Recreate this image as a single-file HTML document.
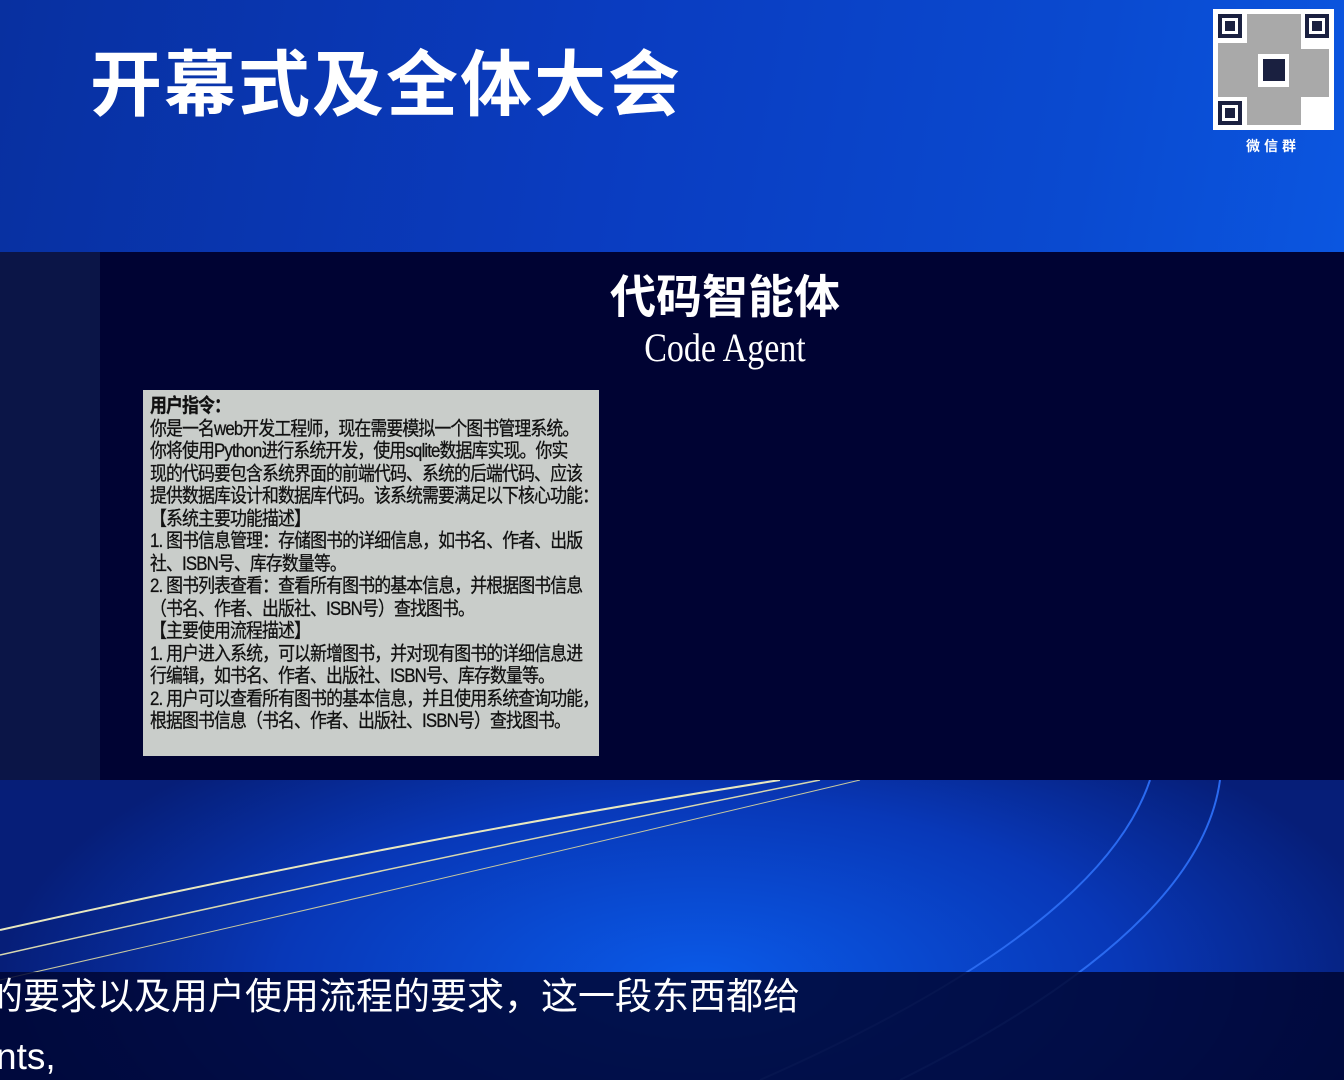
<!DOCTYPE html><html><head><meta charset="utf-8"><style>
body{margin:0;width:1344px;height:1080px;overflow:hidden;position:relative;font-family:"Liberation Sans","Noto Sans CJK SC",sans-serif;}
.top{position:absolute;left:0;top:0;width:1344px;height:252px;background:linear-gradient(100deg,#0830a0 0%,#0a3cc0 45%,#0a4ad0 80%,#0b56e0 100%);}
.title{position:absolute;left:90px;top:46px;font-size:72px;font-weight:bold;color:#fff;letter-spacing:2px;line-height:80px;}
.qr{position:absolute;left:1213px;top:9px;width:121px;height:121px;background:#fff;}
.wx{position:absolute;left:1246px;top:136px;color:#fff;font-size:14px;letter-spacing:4px;font-weight:bold}
.mid{position:absolute;left:0;top:252px;width:1344px;height:528px;background:#000333;}
.left{position:absolute;left:0;top:252px;width:100px;height:528px;background:#0b1547;}
.h1{position:absolute;left:0;width:1450px;text-align:center;top:268px;color:#fff;font-size:46px;font-weight:bold;line-height:58px}
.h2{position:absolute;left:0;width:1450px;text-align:center;top:326px;color:#fff;font-size:40px;font-family:"Liberation Serif",serif;line-height:44px;transform:scaleX(.85);transform-origin:725px 0}
.box{position:absolute;left:143px;top:390px;width:456px;height:366px;background:#c9cdca;overflow:hidden}
.in{position:absolute;left:7px;top:5px;font-size:19.5px;line-height:22.5px;color:#111;letter-spacing:-1px;white-space:nowrap;transform:scaleX(.865);transform-origin:0 0;-webkit-text-stroke:0.3px #111}
.bot{position:absolute;left:0;top:780px;width:1344px;height:300px;background:radial-gradient(ellipse 700px 300px at 700px 200px,#0a5ae8,#0838b8 60%,#061e78 100%);overflow:hidden}
.sub{position:absolute;left:0;top:972px;width:1344px;height:108px;background:rgba(0,6,50,.85);}
.s1{position:absolute;left:-14px;top:974px;color:#fff;font-size:37px;line-height:46px;letter-spacing:0}
.s2{position:absolute;left:-4px;top:1034px;color:#fff;font-size:37px;line-height:46px}
</style></head><body>
<div class="top"></div>
<div class="title">开幕式及全体大会</div>
<div class="qr"><svg width="121" height="121"><g fill="#1a2040"><rect x="5" y="5" width="24" height="24"/><rect x="92" y="5" width="24" height="24"/><rect x="5" y="92" width="24" height="24"/></g><g fill="#fff"><rect x="9" y="9" width="16" height="16"/><rect x="96" y="9" width="16" height="16"/><rect x="9" y="96" width="16" height="16"/></g><g fill="#1a2040"><rect x="12" y="12" width="10" height="10"/><rect x="99" y="12" width="10" height="10"/><rect x="12" y="99" width="10" height="10"/><rect x="50" y="50" width="22" height="22"/></g><g fill="#555" opacity=".5"><rect x="34" y="5" width="54" height="40"/><rect x="5" y="34" width="40" height="54"/><rect x="76" y="40" width="40" height="48"/><rect x="34" y="78" width="54" height="38"/></g></svg></div>
<div class="wx">微信群</div>
<div class="mid"></div><div class="left"></div>
<div class="h1">代码智能体</div>
<div class="h2">Code Agent</div>
<div class="box"><div class="in"><b>用户指令：</b><br>你是一名web开发工程师，现在需要模拟一个图书管理系统。<br>你将使用Python进行系统开发，使用sqlite数据库实现。你实<br>现的代码要包含系统界面的前端代码、系统的后端代码、应该<br>提供数据库设计和数据库代码。该系统需要满足以下核心功能：<br>【系统主要功能描述】<br>1. 图书信息管理：存储图书的详细信息，如书名、作者、出版<br>社、ISBN号、库存数量等。<br>2. 图书列表查看：查看所有图书的基本信息，并根据图书信息<br>（书名、作者、出版社、ISBN号）查找图书。<br>【主要使用流程描述】<br>1. 用户进入系统，可以新增图书，并对现有图书的详细信息进<br>行编辑，如书名、作者、出版社、ISBN号、库存数量等。<br>2. 用户可以查看所有图书的基本信息，并且使用系统查询功能，<br>根据图书信息（书名、作者、出版社、ISBN号）查找图书。</div></div>
<div class="bot"><svg width="1344" height="300" style="position:absolute;left:0;top:0" fill="none"><path d="M0 150 Q400 60 780 0" stroke="#e8e8c0" stroke-width="2"/><path d="M0 175 Q420 80 820 0" stroke="#d8d8b0" stroke-width="1.5"/><path d="M0 200 Q440 100 860 0" stroke="#c8c8a0" stroke-width="1"/><path d="M760 300 Q1100 150 1150 0" stroke="#2a6af0" stroke-width="2"/><path d="M900 300 Q1200 150 1220 0" stroke="#2a6af0" stroke-width="2"/></svg></div>
<div class="sub"></div>
<div class="s1">的要求以及用户使用流程的要求，这一段东西都给</div>
<div class="s2">nts,</div>
</body></html>
